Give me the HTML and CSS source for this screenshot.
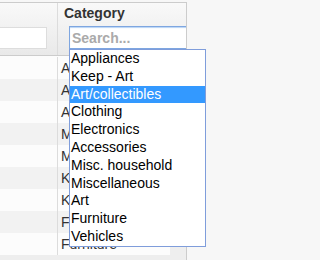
FILE: index.html
```html
<!DOCTYPE html>
<html>
<head>
<meta charset="utf-8">
<link rel="stylesheet" href="styles.css">
</head>
<body>
<div class="table">
  <div class="thead">
    <div class="th th-left"><input class="filter-left" type="text"></div>
    <div class="th th-cat">
      <div class="th-title">Category</div>
      <input class="search" type="text" placeholder="Search...">
    </div>
  </div>
  <div class="tbody">
    <div class="tr"><div class="td td-left"></div><div class="td td-cat">Appliances</div></div>
    <div class="tr"><div class="td td-left"></div><div class="td td-cat">Art/collectibles</div></div>
    <div class="tr"><div class="td td-left"></div><div class="td td-cat">Accessories</div></div>
    <div class="tr"><div class="td td-left"></div><div class="td td-cat">Misc. household</div></div>
    <div class="tr"><div class="td td-left"></div><div class="td td-cat">Miscellaneous</div></div>
    <div class="tr"><div class="td td-left"></div><div class="td td-cat">Keep - Art</div></div>
    <div class="tr"><div class="td td-left"></div><div class="td td-cat">Keep - Art</div></div>
    <div class="tr"><div class="td td-left"></div><div class="td td-cat">Furniture</div></div>
    <div class="tr"><div class="td td-left"></div><div class="td td-cat">Furniture</div></div>
  </div>
  <ul class="dropdown">
    <li>Appliances</li>
    <li>Keep - Art</li>
    <li class="active">Art/collectibles</li>
    <li>Clothing</li>
    <li>Electronics</li>
    <li>Accessories</li>
    <li>Misc. household</li>
    <li>Miscellaneous</li>
    <li>Art</li>
    <li>Furniture</li>
    <li>Vehicles</li>
  </ul>
</div>
</body>
</html>
```
FILE: styles.css
```css
html, body {
  margin: 0;
  padding: 0;
  background: #f7f7f7;
  overflow: hidden;
  font-family: "Liberation Sans", Arial, sans-serif;
}
.table {
  position: relative;
  margin-top: 2px;
  margin-left: -60px;
  width: 247px;
  height: 258px;
  background: #eeeeee;
  border-right: 1px solid #cccccc;
  box-sizing: border-box;
}
.thead {
  display: flex;
  height: 54px;
  border-top: 1px solid #cccccc;
  border-bottom: 1px solid #cccccc;
  background: linear-gradient(to bottom, #f9f9f9, #e9e9e9);
  box-sizing: border-box;
}
.th {
  box-sizing: border-box;
  overflow: hidden;
}
.th-left {
  width: 118px;
  border-right: 1px solid #dcdcdc;
}
.filter-left {
  display: block;
  margin: 24px 0 0 40px;
  width: 67px;
  height: 22px;
  box-sizing: border-box;
  border: 1px solid #dddddd;
  background: #ffffff;
  padding: 0;
  outline: none;
}
.th-cat {
  width: 128px;
}
.th-title {
  padding: 2px 0 0 6px;
  font-weight: bold;
  font-size: 14px;
  line-height: 16px;
  color: #333333;
}
.search {
  display: block;
  margin: 5px 0 0 11px;
  width: 140px;
  height: 23px;
  box-sizing: border-box;
  border: 1px solid #7ea6e0;
  box-shadow: inset 0 1px 1px #b9d4f5;
  background: #ffffff;
  padding: 0 0 0 2px;
  outline: none;
  font-family: "Liberation Sans", Arial, sans-serif;
  font-size: 14px;
  font-weight: bold;
}
.search::placeholder {
  color: #aaaaaa;
  font-weight: bold;
}
.tbody {
  padding-top: 1px;
  background: #fcfcfc;
  width: 230px;
}
.tr {
  display: flex;
  height: 22px;
  background: #fcfcfc;
}
.tr:nth-child(even) {
  background: #f2f2f2;
}
.td {
  box-sizing: border-box;
  height: 22px;
  font-size: 14px;
  line-height: 22px;
  color: #333333;
  white-space: nowrap;
  overflow: hidden;
}
.td-left {
  width: 118px;
  border-right: 1px solid #dcdcdc;
}
.td-cat {
  width: 112px;
  padding-left: 3px;
}
.dropdown {
  position: absolute;
  left: 129px;
  top: 47px;
  width: 137px;
  margin: 0;
  padding: 0;
  list-style: none;
  background: #ffffff;
  border: 1px solid #7f9ddb;
  box-sizing: border-box;
}
.dropdown li {
  height: 17.8px;
  line-height: 17.8px;
  font-size: 14px;
  color: #000000;
  padding-left: 1px;
  white-space: nowrap;
}
.dropdown li.active {
  background: #3399ff;
  color: #ffffff;
}
```
